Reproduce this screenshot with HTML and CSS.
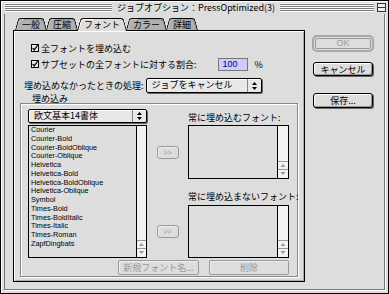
FILE: index.html
```html
<!DOCTYPE html>
<html lang="ja">
<head>
<meta charset="UTF-8">
<title>ジョブオプション</title>
<link rel="stylesheet" href="styles.css">
</head>
<body>
<div class="window">
    <div class="titlebar">
        <span class="stripes left"></span>
        <span class="title">ジョブオプション：PressOptimized(3)</span>
        <span class="stripes"></span>
        <span class="zoombox"></span>
    </div>
    <div class="frame">
        <div class="tabarea">
            <ul class="tabs">
                <li>一般</li>
                <li>圧縮</li>
                <li class="active">フォント</li>
                <li>カラー</li>
                <li>詳細</li>
            </ul>
            <div class="panel">
                <div class="check">
                    <svg width="8" height="8" viewBox="0 0 8 8"><rect x=".5" y=".5" width="7" height="7" fill="#eee" stroke="#000"/><path d="M1.6 3.8L3.3 5.9L6.6 1.2" fill="none" stroke="#000" stroke-width="1.2"/></svg>
                    <span>全フォントを埋め込む</span>
                </div>
                <div class="check">
                    <svg width="8" height="8" viewBox="0 0 8 8"><rect x=".5" y=".5" width="7" height="7" fill="#eee" stroke="#000"/><path d="M1.6 3.8L3.3 5.9L6.6 1.2" fill="none" stroke="#000" stroke-width="1.2"/></svg>
                    <span>サブセットの全フォントに対する割合:</span>
                    <span class="field">100</span>
                    <span class="unit">%</span>
                </div>
                <div class="row">
                    <span>埋め込めなかったときの処理:</span>
                    <div class="popup wide">
                        <span class="value">ジョブをキャンセル</span>
                        <span class="arrows"><svg width="5" height="8" viewBox="0 0 5 8"><path d="M2.5 0L5 3H0ZM0 5H5L2.5 8Z"/></svg></span>
                    </div>
                </div>
                <div class="group-title">埋め込み</div>
                <div class="group">
                    <div class="grid">
                        <div class="popup source">
                            <span class="value">欧文基本14書体</span>
                            <span class="arrows"><svg width="5" height="8" viewBox="0 0 5 8"><path d="M2.5 0L5 3H0ZM0 5H5L2.5 8Z"/></svg></span>
                        </div>
                        <div class="list fonts">
                            <ul>
                                <li>Courier</li>
                                <li>Courier-Bold</li>
                                <li>Courier-BoldOblique</li>
                                <li>Courier-Oblique</li>
                                <li>Helvetica</li>
                                <li>Helvetica-Bold</li>
                                <li>Helvetica-BoldOblique</li>
                                <li>Helvetica-Oblique</li>
                                <li>Symbol</li>
                                <li>Times-Bold</li>
                                <li>Times-BoldItalic</li>
                                <li>Times-Italic</li>
                                <li>Times-Roman</li>
                                <li>ZapfDingbats</li>
                            </ul>
                            <div class="scroll"><svg width="9" height="17" viewBox="0 0 9 17"><path d="M0 .5H9M0 8.5H9" stroke="#999"/><path d="M4.5 3L7 6H2ZM2 11H7L4.5 14Z" fill="#999"/></svg></div>
                        </div>
                        <span class="btn off move move-in">&gt;&gt;</span>
                        <span class="btn off move move-out">&gt;&gt;</span>
                        <div class="label-in">常に埋め込むフォント:</div>
                        <div class="list box-in">
                            <ul></ul>
                            <div class="scroll"><svg width="10" height="17" viewBox="0 0 10 17"><path d="M0 .5H10M0 8.5H10" stroke="#999"/><path d="M5 3L7.5 6H2.5ZM2.5 11H7.5L5 14Z" fill="#999"/></svg></div>
                        </div>
                        <div class="label-out">常に埋め込まないフォント:</div>
                        <div class="list box-out">
                            <ul></ul>
                            <div class="scroll"><svg width="10" height="17" viewBox="0 0 10 17"><path d="M0 .5H10M0 8.5H10" stroke="#999"/><path d="M5 3L7.5 6H2.5ZM2.5 11H7.5L5 14Z" fill="#999"/></svg></div>
                        </div>
                    </div>
                    <div class="actions">
                        <span class="btn off new">新規フォント名...</span>
                        <span class="btn off remove">削除</span>
                    </div>
                </div>
            </div>
        </div>
        <div class="side">
            <span class="ok">OK</span>
            <span class="btn cancel">キャンセル</span>
            <span class="btn save">保存...</span>
        </div>
    </div>
</div>
</body>
</html>
```

FILE: styles.css
```css
* {
    margin: 0;
    padding: 0;
}
ul {
    list-style: none;
}
body {
    background: #ddd;
    font-family: "Noto Sans CJK JP", "Liberation Sans", sans-serif;
    font-size: 9px;
    line-height: 1;
    color: #000;
}
.window {
    width: 389px;
    height: 294px;
    box-sizing: border-box;
    border: 1px solid #000;
    background: #ddd;
    box-shadow: inset 1px 1px #fff;
    display: flex;
    flex-direction: column;
}
.titlebar {
    height: 13px;
    display: flex;
    align-items: center;
    padding: 0 2px 0 4px;
}
.stripes {
    flex: 1;
    height: 9px;
    background: repeating-linear-gradient(#fff 0 1px, #7a7a7a 1px 2px);
}
.stripes.left {
    flex: 0 0 107px;
}
.title {
    padding: 0 5px;
    white-space: nowrap;
    line-height: 13px;
}
.zoombox {
    width: 7px;
    height: 7px;
    margin-left: 3px;
    border: 1px solid #333;
    background: linear-gradient(#333, #333) center / 100% 1px no-repeat, #eee;
}
.frame {
    flex: 1;
    margin: 0 3px 3px;
    border: 1px solid #777;
    border-top: 0;
    box-shadow: 1px 1px #fff;
    display: flex;
    gap: 7px;
    padding: 4px 8px 7px;
}
.tabarea {
    width: 292px;
    display: flex;
    flex-direction: column;
}
.tabs {
    display: flex;
    height: 12px;
    padding-left: 2px;
}
.tabs li {
    position: relative;
    z-index: 0;
    padding: 0 7px;
    margin-right: -1px;
    line-height: 13px;
}
.tabs li::before,
.tabs li::after {
    content: "";
    position: absolute;
    top: 0;
    bottom: 0;
    width: 60%;
    z-index: -1;
    background: #b0b0b0;
    border-top: 1px solid #000;
}
.tabs li::before {
    left: 0;
    border-left: 1px solid #000;
    border-radius: 3px 0 0 0;
    box-shadow: inset 1px 1px #ccc;
    transform: skewX(-15deg);
    transform-origin: bottom left;
}
.tabs li::after {
    right: 0;
    border-right: 1px solid #000;
    border-radius: 0 3px 0 0;
    box-shadow: inset -1px 1px #999;
    transform: skewX(15deg);
    transform-origin: bottom right;
}
.tabs li.active {
    z-index: 2;
}
.tabs li.active::before,
.tabs li.active::after {
    background: #ddd;
    bottom: -1px;
}
.tabs li.active::before {
    box-shadow: inset 1px 1px #fff;
}
.tabs li.active::after {
    box-shadow: none;
}
.panel {
    position: relative;
    z-index: 1;
    flex: 1;
    border: 1px solid #000;
    box-shadow: inset 1px 1px #fff, inset -1px -1px #aaa;
    padding-top: 10px;
}
.check {
    display: flex;
    align-items: center;
    gap: 2px;
    height: 14px;
    margin-left: 17px;
}
.check + .check {
    margin-top: 2px;
}
.field {
    margin-left: 19px;
    width: 30px;
    height: 13px;
    box-sizing: border-box;
    border: 1px solid #777;
    background: #ccccff;
    color: #000080;
    padding-left: 4px;
    font-family: "Liberation Sans", sans-serif;
    line-height: 11px;
}
.unit {
    margin-left: 5px;
}
.row {
    display: flex;
    align-items: center;
    height: 15px;
    margin: 7px 0 0 10px;
}
.popup {
    display: flex;
    align-items: stretch;
    height: 14px;
    box-sizing: border-box;
    border: 1px solid #000;
    border-radius: 2px;
    background: #e8e8e8;
    box-shadow: inset 1px 1px #fff, 1px 1px #666;
}
.popup .value {
    flex: 1;
    padding-left: 5px;
    line-height: 12px;
    white-space: nowrap;
}
.popup .arrows {
    width: 13px;
    border-left: 1px solid #888;
    display: flex;
    align-items: center;
    justify-content: center;
}
.popup.wide {
    width: 116px;
    height: 15px;
    margin-left: 2px;
}
.group-title {
    height: 9px;
    line-height: 9px;
    margin-top: 1px;
    padding-left: 18px;
}
.group {
    margin: 0 6px;
    border: 1px solid #888;
    box-shadow: inset 1px 1px #fff, 1px 1px #fff;
    padding: 5px 8px 1px 7px;
}
.grid {
    display: grid;
    grid-template-columns: 119px 1fr 101px;
    grid-template-rows: 16px 54px 26px 53px;
}
.source {
    grid-column: 1;
    grid-row: 1;
}
.list {
    display: flex;
    border: 1px solid #000;
    background: #dedede;
}
.list ul {
    flex: 1;
}
.scroll {
    width: 10px;
    border-left: 1px solid #000;
    background: #f2f2f2;
    display: flex;
    flex-direction: column;
    justify-content: flex-end;
}
.fonts {
    grid-column: 1;
    grid-row: 2 / 5;
}
.fonts ul {
    padding-left: 2px;
    font-family: "Liberation Sans", sans-serif;
    font-size: 7.3px;
    line-height: 8.75px;
}
.fonts .scroll {
    width: 9px;
}
.label-in {
    grid-column: 3;
    grid-row: 1;
    align-self: center;
    white-space: nowrap;
}
.box-in {
    grid-column: 3;
    grid-row: 2;
}
.label-out {
    grid-column: 3;
    grid-row: 3;
    align-self: end;
    margin-bottom: 4px;
    white-space: nowrap;
}
.box-out {
    grid-column: 3;
    grid-row: 4;
}
.btn {
    display: flex;
    align-items: center;
    justify-content: center;
    box-sizing: border-box;
    border: 1px solid #000;
    border-radius: 3px;
    background: #ddd;
    box-shadow: inset 1px 1px #fff, inset -1px -1px #999;
    white-space: nowrap;
}
.btn.off {
    border-color: #999;
    color: #999;
    box-shadow: inset 1px 1px #eee;
}
.move {
    width: 22px;
    height: 13px;
    justify-self: center;
    align-self: center;
    font-family: "Liberation Sans", sans-serif;
    font-size: 7px;
}
.move-in {
    grid-column: 2;
    grid-row: 2;
}
.move-out {
    grid-column: 2;
    grid-row: 4;
}
.actions {
    display: flex;
    justify-content: flex-end;
    gap: 10px;
    margin-top: 2px;
}
.actions .btn {
    height: 15px;
    border-radius: 2px;
}
.new {
    width: 81px;
}
.remove {
    width: 80px;
}
.side {
    width: 62px;
    display: flex;
    flex-direction: column;
    align-items: center;
    padding-top: 17px;
}
.ok {
    display: flex;
    align-items: center;
    justify-content: center;
    width: 62px;
    height: 17px;
    box-sizing: border-box;
    border: 2px solid #a8a8a8;
    border-radius: 5px;
    box-shadow: inset 0 0 0 1px #ddd, inset 0 0 0 2px #999;
    color: #999;
    font-family: "Liberation Sans", sans-serif;
}
.cancel {
    width: 60px;
    height: 14px;
    margin-top: 10px;
    box-shadow: inset 1px 1px #fff, inset -1px -1px #999, 1px 1px #666;
}
.save {
    width: 60px;
    height: 15px;
    margin-top: 17px;
    box-shadow: inset 1px 1px #fff, inset -1px -1px #999, 1px 1px #666;
}
```
